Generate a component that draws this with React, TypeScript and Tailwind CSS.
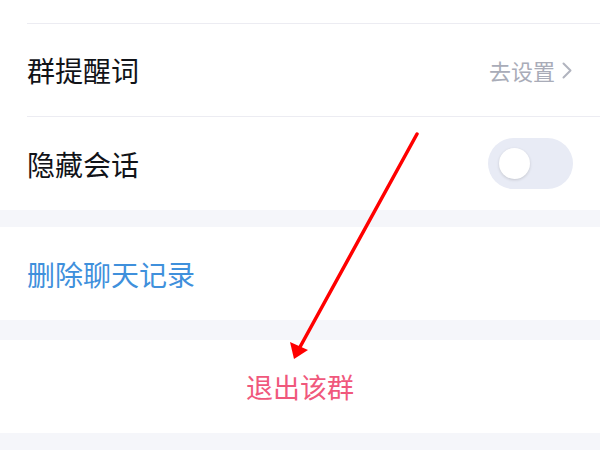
import React from "react";

const font = { fontFamily: '"Noto Sans CJK SC", "Noto Sans", sans-serif' };

export default function App() {
  return (
    <div
      className="relative w-[600px] h-[450px] overflow-hidden bg-[#f5f6fa]"
      style={font}
    >
      <div className="bg-white pl-[27px]">
        <div className="h-[24px] border-b border-[#ececf2]" />
        <div className="h-[93px] border-b border-[#ececf2] flex items-center justify-between pr-[28px]">
          <span className="text-[28px] leading-none text-[#111318]">群提醒词</span>
          <div className="flex items-center gap-[7px]">
            <span className="text-[22px] leading-none text-[#a9acb8]">去设置</span>
            <svg width="10" height="17" viewBox="0 0 10 17" fill="none">
              <path d="M1.5 1.5 L8.5 8.5 L1.5 15.5" stroke="#b1b4bf" strokeWidth="2" strokeLinecap="round" strokeLinejoin="round" />
            </svg>
          </div>
        </div>
        <div className="h-[93px] flex items-center justify-between pr-[27px]">
          <span className="text-[28px] leading-none text-[#111318]">隐藏会话</span>
          <div className="w-[85px] h-[51px] rounded-full bg-[#e8ebf5] flex items-center pl-[11px]">
            <div className="w-[31px] h-[31px] rounded-full bg-white shadow-[0_1px_3px_rgba(0,0,0,0.15)]" />
          </div>
        </div>
      </div>
      <div className="mt-[17px] bg-white h-[93px] flex items-center pl-[27px]">
        <span className="text-[28px] leading-none text-[#3f90dc]">删除聊天记录</span>
      </div>
      <div className="mt-[20px] bg-white h-[93px] flex items-center justify-center">
        <span className="text-[27px] leading-none text-[#f0587c]">退出该群</span>
      </div>
      <svg className="absolute left-0 top-0 pointer-events-none" width="600" height="450">
        <line x1="417" y1="134" x2="300" y2="347" stroke="#ff0000" strokeWidth="3.5" strokeLinecap="round" />
        <polygon points="294,359 290,342 308,350" fill="#ff0000" />
      </svg>
    </div>
  );
}
